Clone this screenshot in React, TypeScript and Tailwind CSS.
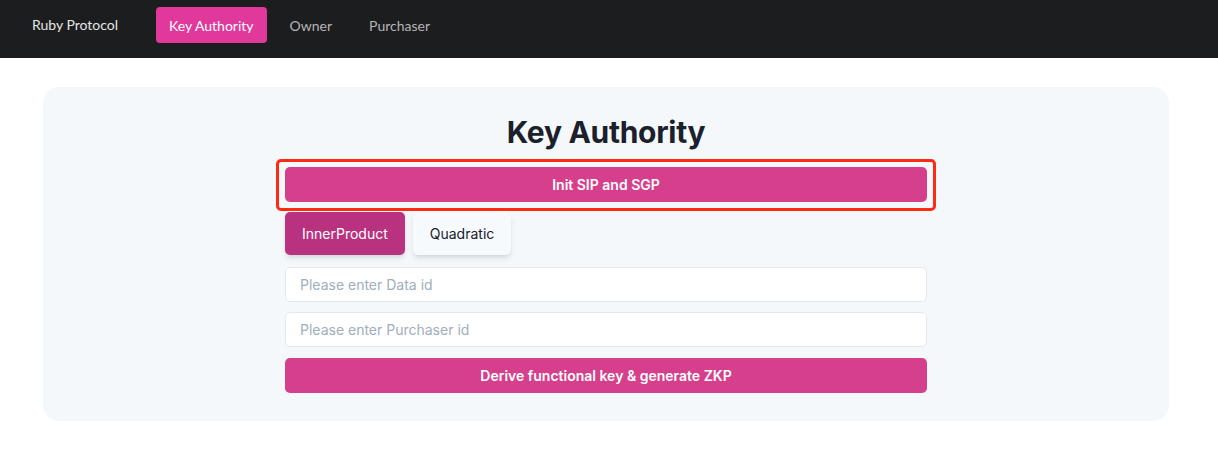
import React, { useState } from 'react';

const navItems = ['Key Authority', 'Owner', 'Purchaser'];

const App: React.FC = () => {
  const [active, setActive] = useState('Key Authority');
  const [mode, setMode] = useState<'InnerProduct' | 'Quadratic'>('InnerProduct');
  const [dataId, setDataId] = useState('');
  const [purchaserId, setPurchaserId] = useState('');

  return (
    <div className="min-h-screen bg-white" style={{ fontFamily: 'Inter, "Noto Sans", sans-serif' }}>
      <nav className="h-[58px] bg-[#1c1d1f] flex items-start pt-[7px] pl-[32px]" style={{ fontFamily: 'Lato, sans-serif' }}>
        <span className="h-[36px] leading-[36px] text-[14px] text-[#e5e5e5] mr-[38px]">Ruby Protocol</span>
        <div className="flex items-center gap-[9px]">
          {navItems.map(item => (
            <button
              key={item}
              onClick={() => setActive(item)}
              className={
                item === active
                  ? 'h-[36px] px-[13px] rounded-[4px] bg-[#e0399b] text-white text-[14px]'
                  : 'h-[36px] px-[14px] rounded-[4px] text-[#b5b5b5] text-[14px]'
              }
            >
              {item}
            </button>
          ))}
        </div>
      </nav>

      <div className="pl-[43px] pr-[49px] pt-[29px]">
        <div className="bg-[#f5f8fb] rounded-[16px] pt-[27px] pb-[28px] flex flex-col items-center">
          <h1 className="text-[30px] leading-[36px] font-bold text-[#1a202c] tracking-[-0.3px]">Key Authority</h1>
          <div className="w-[642px] flex flex-col">
            <div className="mt-[9px] -mx-[9px] border-[3px] border-[#ff2a12] rounded-[5px] pt-[5px] pb-[6px] px-[6px]">
              <button className="w-full h-[35px] rounded-[5px] bg-[#d53f8c] text-white text-[14px] font-semibold">
                Init SIP and SGP
              </button>
            </div>
            <div className="flex gap-[8px] mt-[1px]">
              <button
                onClick={() => setMode('InnerProduct')}
                className={
                  mode === 'InnerProduct'
                    ? 'h-[43px] px-[17px] rounded-[5px] bg-[#b83280] text-white text-[14px] shadow-md'
                    : 'h-[43px] px-[17px] rounded-[5px] bg-[#f7fafc] text-[#1a202c] text-[14px] shadow-md'
                }
              >
                InnerProduct
              </button>
              <button
                onClick={() => setMode('Quadratic')}
                className={
                  mode === 'Quadratic'
                    ? 'h-[43px] px-[17px] rounded-[5px] bg-[#b83280] text-white text-[14px] shadow-md'
                    : 'h-[43px] px-[17px] rounded-[5px] bg-[#f7fafc] text-[#1a202c] text-[14px] shadow-md'
                }
              >
                Quadratic
              </button>
            </div>
            <input
              value={dataId}
              onChange={e => setDataId(e.target.value)}
              placeholder="Please enter Data id"
              className="mt-[12px] h-[35px] px-[14px] rounded-[5px] border border-[#e2e8f0] bg-white text-[14px] placeholder-[#a0aec0] outline-none"
            />
            <input
              value={purchaserId}
              onChange={e => setPurchaserId(e.target.value)}
              placeholder="Please enter Purchaser id"
              className="mt-[10px] h-[35px] px-[14px] rounded-[5px] border border-[#e2e8f0] bg-white text-[14px] placeholder-[#a0aec0] outline-none"
            />
            <button className="mt-[11px] h-[35px] rounded-[5px] bg-[#d53f8c] text-white text-[14px] font-semibold">
              Derive functional key &amp; generate ZKP
            </button>
          </div>
        </div>
      </div>
    </div>
  );
};

export default App;
